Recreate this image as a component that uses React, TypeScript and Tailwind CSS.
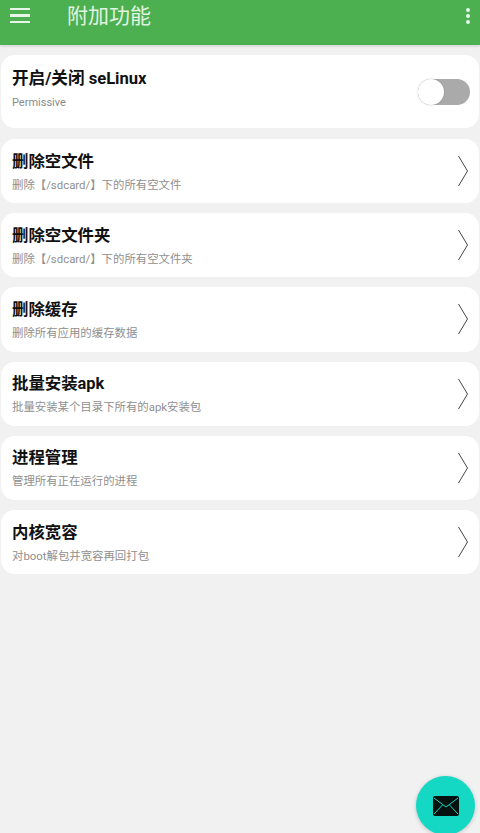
const FONT = "font-['Roboto','Noto_Sans_CJK_SC',sans-serif]"

const ITEMS = [
  { title: '删除空文件', desc: '删除【/sdcard/】下的所有空文件' },
  { title: '删除空文件夹', desc: '删除【/sdcard/】下的所有空文件夹' },
  { title: '删除缓存', desc: '删除所有应用的缓存数据' },
  { title: '批量安装apk', desc: '批量安装某个目录下所有的apk安装包' },
  { title: '进程管理', desc: '管理所有正在运行的进程' },
  { title: '内核宽容', desc: '对boot解包并宽容再回打包' },
]

function Chevron() {
  return (
    <svg width="12" height="32" viewBox="0 0 12 32" fill="none" className="shrink-0">
      <path d="M1.5 1 L10.5 16 L1.5 31" stroke="#444" strokeWidth="1" />
    </svg>
  )
}

export default function App() {
  return (
    <div className={`relative h-[833px] w-[480px] overflow-hidden bg-[#f1f1f1] ${FONT}`}>
      <header className="flex h-[45px] items-center justify-between bg-[#4caf50] pb-[13px] pl-[10px] pr-[10px] shadow-[0_1px_3px_rgba(0,0,0,0.15)]">
        <div className="flex items-center gap-[37px]">
          <div className="-mt-px flex w-[20px] flex-col gap-[4px]">
            <div className="h-[2.5px] bg-[#e8f5e9]" />
            <div className="h-[2.5px] bg-[#e8f5e9]" />
            <div className="h-[2.5px] bg-[#e8f5e9]" />
          </div>
          <h1 className="text-[21px] leading-none text-[#e0f4e1]">附加功能</h1>
        </div>
        <div className="flex flex-col gap-[2px]">
          <div className="h-[4px] w-[4px] rounded-full bg-[#e8f5e9]" />
          <div className="h-[4px] w-[4px] rounded-full bg-[#e8f5e9]" />
          <div className="h-[4px] w-[4px] rounded-full bg-[#e8f5e9]" />
        </div>
      </header>

      <main className="flex flex-col gap-[10px] px-px pt-[10px]">
        <section className="mb-px flex h-[73px] items-center justify-between rounded-[14px] bg-white pl-[11px] pr-[9px]">
          <div className="-mt-[5px]">
            <p className="text-[16.6px] font-bold leading-[22px] text-[#111]">开启/关闭 seLinux</p>
            <p className="mt-[6px] text-[11px] leading-[14px] text-[#8a8a8a]">Permissive</p>
          </div>
          <div className="relative h-[26px] w-[52px] rounded-full bg-[#aaaaaa]">
            <div className="absolute left-0 top-0 h-[26px] w-[26px] rounded-full bg-white shadow-[0_0_2px_rgba(0,0,0,0.2)]" />
          </div>
        </section>

        {ITEMS.map((item) => (
          <section key={item.title} className="flex h-[64.2px] items-center justify-between rounded-[14px] bg-white pl-[11px] pr-[10px]">
            <div>
              <p className="text-[16.4px] font-bold leading-[22px] text-[#111]">{item.title}</p>
              <p className="mt-[5px] text-[11.4px] leading-[14px] text-[#8f8f8f]">{item.desc}</p>
            </div>
            <Chevron />
          </section>
        ))}
      </main>

      <button className="absolute left-[416px] top-[776px] flex h-[59px] w-[59px] items-center justify-center rounded-full bg-[#14d8c4] shadow-[0_1px_4px_rgba(0,0,0,0.2)]">
        <svg width="26" height="20" viewBox="0 0 26 20">
          <rect x="0" y="0" width="26" height="20" rx="2" fill="#03110f" />
          <path d="M1 2 L13 11 L25 2 M1 18 L9.5 9 M25 18 L16.5 9" fill="none" stroke="#14d8c4" strokeWidth="1" />
        </svg>
      </button>
    </div>
  )
}
